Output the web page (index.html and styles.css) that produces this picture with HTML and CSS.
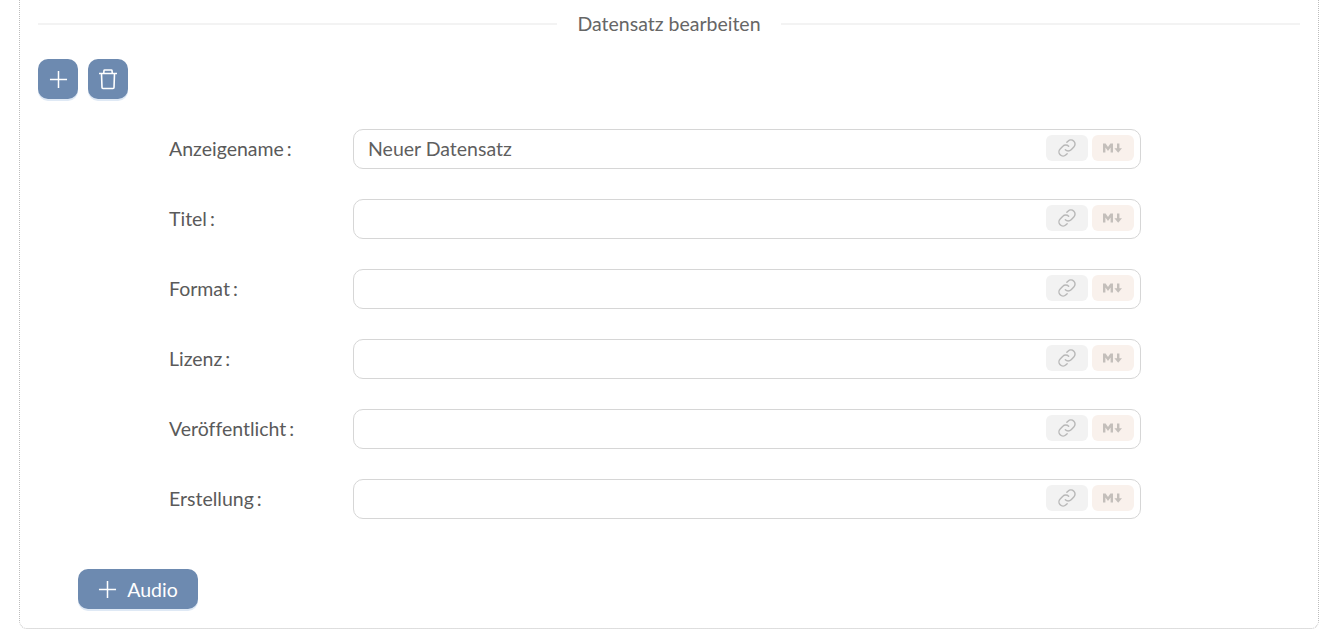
FILE: index.html
```html
<!DOCTYPE html>
<html lang="de">
<head>
<meta charset="utf-8">
<title>Datensatz bearbeiten</title>
<link rel="stylesheet" href="styles.css">
</head>
<body>
<svg class="defs" width="0" height="0" aria-hidden="true">
  <symbol id="i-link" viewBox="0 0 24 24"><path d="M10 14a4.800 4.800 0 0 0 7 0l3.200-3.200a4.900 4.900 0 0 0-7-7l-1.400 1.400M14 10a4.800 4.800 0 0 0-7 0l-3.200 3.200a4.900 4.900 0 0 0 7 7l1.400-1.400" fill="none" stroke="currentColor" stroke-width="1.700" stroke-linecap="round"/></symbol>
  <symbol id="i-md" viewBox="0 0 22 12"><path d="M1 10.500V1.500h2.600L6 5l2.400-3.500H11v9H8.600V5.500L6 9 3.400 5.500v5zM15 1.500h2.400v4.700H20l-3.800 4.600-3.800-4.600H15z" fill="currentColor"/></symbol>
</svg>
<main class="panel">
  <div class="legend"><span class="legend-line"></span><span class="legend-text">Datensatz bearbeiten</span><span class="legend-line"></span></div>
  <div class="tools">
    <button class="btn square" type="button" aria-label="Hinzufügen"><svg class="plus" viewBox="0 0 20 20"><path d="M10 1v18M1 10h18"/></svg></button>
    <button class="btn square" type="button" aria-label="Löschen"><svg class="trash" viewBox="0 0 20 21"><path d="M1 4.500h18M3.500 4.500l.5 14a1 1 0 0 0 1 1h10a1 1 0 0 0 1-1l.5-14M5.700 4.500l.3-3a.6.6 0 0 1 .6-.5h6.800a.6.6 0 0 1 .6.5l.3 3"/></svg></button>
  </div>
  <form class="rows">
    <div class="row"><label class="label">Anzeigename<span class="colon">:</span></label><div class="field"><span class="value">Neuer Datensatz</span><span class="chip chip-link"><svg class="ic-link"><use href="#i-link"/></svg></span><span class="chip chip-md"><svg class="ic-md"><use href="#i-md"/></svg></span></div></div>
    <div class="row"><label class="label">Titel<span class="colon">:</span></label><div class="field"><span class="value"></span><span class="chip chip-link"><svg class="ic-link"><use href="#i-link"/></svg></span><span class="chip chip-md"><svg class="ic-md"><use href="#i-md"/></svg></span></div></div>
    <div class="row"><label class="label">Format<span class="colon">:</span></label><div class="field"><span class="value"></span><span class="chip chip-link"><svg class="ic-link"><use href="#i-link"/></svg></span><span class="chip chip-md"><svg class="ic-md"><use href="#i-md"/></svg></span></div></div>
    <div class="row"><label class="label">Lizenz<span class="colon">:</span></label><div class="field"><span class="value"></span><span class="chip chip-link"><svg class="ic-link"><use href="#i-link"/></svg></span><span class="chip chip-md"><svg class="ic-md"><use href="#i-md"/></svg></span></div></div>
    <div class="row"><label class="label">Veröffentlicht<span class="colon">:</span></label><div class="field"><span class="value"></span><span class="chip chip-link"><svg class="ic-link"><use href="#i-link"/></svg></span><span class="chip chip-md"><svg class="ic-md"><use href="#i-md"/></svg></span></div></div>
    <div class="row"><label class="label">Erstellung<span class="colon">:</span></label><div class="field"><span class="value"></span><span class="chip chip-link"><svg class="ic-link"><use href="#i-link"/></svg></span><span class="chip chip-md"><svg class="ic-md"><use href="#i-md"/></svg></span></div></div>
  </form>
  <button class="btn wide" type="button"><svg class="plus" viewBox="0 0 20 20"><path d="M10 1v18M1 10h18"/></svg><span>Audio</span></button>
</main>
</body>
</html>
```
FILE: styles.css
```css
* { box-sizing: border-box; }
html, body { height: 100%; }
body {
  margin: 0;
  background: #fff;
  overflow: hidden;
  font-family: Lato, "Liberation Sans", sans-serif;
  font-size: 19.5px;
  font-variant-ligatures: none;
  color: #5a5a5a;
  padding: 0 17px 0 19px;
}
.defs { display: block; height: 0; }
.panel {
  height: 629px;
  border: 1px dotted #bdbdbd;
  border-top: 0;
  border-radius: 0 0 8px 8px;
  padding: 12px 18px 0;
}
.legend {
  display: flex;
  align-items: center;
  gap: 20px;
  height: 24px;
  line-height: 24px;
}
.legend-line { flex: 1; height: 2px; background: #f3f3f3; }
.legend-text { color: #666; }
.tools { display: flex; gap: 10px; margin-top: 23px; }
.btn {
  display: flex;
  align-items: center;
  justify-content: center;
  border: 0;
  padding: 0;
  height: 40px;
  border-radius: 10px;
  background: #6d8ab0;
  color: #fff;
  box-shadow: 0 2px 0 #dfe9f5;
  font: inherit;
}
.square { width: 40px; }
.plus { width: 19px; height: 19px; fill: none; stroke: #fff; stroke-width: 1.6; }
.trash { width: 20px; height: 21px; fill: none; stroke: #fff; stroke-width: 1.6; }
.rows {
  display: flex;
  flex-direction: column;
  gap: 30px;
  margin-top: 30px;
  padding-left: 131px;
}
.row { display: flex; align-items: center; height: 40px; line-height: 38px; }
.label { width: 184px; flex: none; }
.colon { margin-left: 3px; }
.field {
  display: flex;
  align-items: center;
  width: 788px;
  height: 40px;
  padding: 0 6px 0 14px;
  border: 1px solid #d6d6d6;
  border-radius: 10px;
  background: #fff;
}
.value { flex: 1; color: #5f5f5f; }
.chip {
  display: flex;
  align-items: center;
  justify-content: center;
  width: 42px;
  height: 26px;
  margin-bottom: 2px;
  border-radius: 6px;
}
.chip-link { background: #f2f2f2; color: #b8b8b8; margin-right: 4px; }
.chip-md { background: #f9f1ec; color: #c4bfbb; }
.ic-link { width: 20px; height: 20px; }
.ic-md { width: 22px; height: 12px; }
.wide { width: 120px; gap: 10px; margin: 50px 0 0 40px; }
```
